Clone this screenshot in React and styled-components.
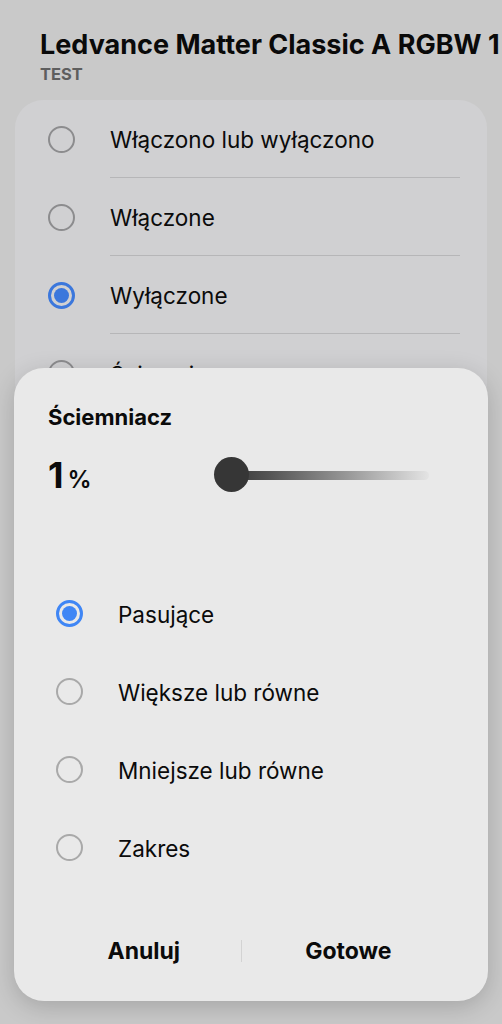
import React from "react";
import styled, { createGlobalStyle } from "styled-components";

const GlobalStyle = createGlobalStyle`
  html, body {
    margin: 0;
    padding: 0;
    background: #c9c9c9;
  }
  body {
    font-family: Inter, Roboto, "Noto Sans", sans-serif;
    color: #0b0b0b;
  }
`;

const Screen = styled.div`
  position: relative;
  width: 502px;
  height: 1024px;
  overflow: hidden;
  background: #c9c9c9;
`;

const Header = styled.div`
  padding: 28px 0 0 40px;
  white-space: nowrap;
`;

const Title = styled.div`
  font-size: 27px;
  font-weight: 700;
  line-height: 34px;
  color: #0a0a0a;
`;

const Subtitle = styled.div`
  margin-top: 2px;
  font-size: 16.5px;
  font-weight: 700;
  line-height: 20px;
  color: #5e5e5e;
`;

const Card = styled.div`
  margin: 16px 15px 0 15px;
  background: #d0d0d2;
  border-radius: 28px;
  padding: 0 27px 0 0;
`;

const Row = styled.div`
  display: flex;
  align-items: center;
  height: 78px;
  padding-left: ${({ $indent }) => $indent}px;
`;

const RowText = styled.div`
  flex: 1;
  height: 100%;
  display: flex;
  align-items: center;
  padding-top: 2px;
  margin-left: ${({ $gap }) => $gap}px;
  font-size: 22.5px;
  color: #0b0b0b;
  border-bottom: ${({ $divider }) => ($divider ? "1.5px solid #b6b6b8" : "none")};
  box-sizing: border-box;
`;

const Radio = styled.span`
  flex: none;
  width: 27px;
  height: 27px;
  box-sizing: border-box;
  border-radius: 50%;
  border: ${({ $on, $blue, $grey }) =>
    $on ? `3px solid ${$blue}` : `2px solid ${$grey}`};
  display: flex;
  align-items: center;
  justify-content: center;

  &::after {
    content: "";
    display: ${({ $on }) => ($on ? "block" : "none")};
    width: 15px;
    height: 15px;
    border-radius: 50%;
    background: ${({ $blue }) => $blue};
  }
`;

const Dialog = styled.div`
  position: absolute;
  left: 14px;
  right: 14px;
  top: 368px;
  height: 633px;
  background: #e9e9e9;
  border-radius: 30px;
  box-shadow: 0 6px 24px rgba(0, 0, 0, 0.18);
  display: flex;
  flex-direction: column;
`;

const DialogBody = styled.div`
  padding: 35px 0 0 34px;
`;

const DialogTitle = styled.div`
  font-size: 22px;
  font-weight: 700;
  line-height: 28px;
  color: #0b0b0b;
`;

const ValueRow = styled.div`
  display: flex;
  align-items: center;
  margin-top: 26px;
  height: 36px;
`;

const Value = styled.div`
  width: 166px;
  display: flex;
  align-items: baseline;
  font-weight: 700;
`;

const Big = styled.span`
  font-size: 36px;
  color: #0b0b0b;
`;

const Unit = styled.span`
  margin-left: 4px;
  font-size: 24px;
  font-weight: 600;
  color: #0b0b0b;
`;

const Slider = styled.div`
  position: relative;
  width: 215px;
  height: 36px;
  display: flex;
  align-items: center;
`;

const Track = styled.div`
  margin-left: 17px;
  width: 198px;
  height: 9px;
  border-radius: 5px;
  background: linear-gradient(to right, #393939 0%, #555 20%, #9a9a9a 60%, rgba(220, 220, 220, 0.4) 100%);
`;

const Knob = styled.div`
  position: absolute;
  left: 0;
  top: 0;
  width: 35px;
  height: 35px;
  border-radius: 50%;
  background: #363636;
`;

const Options = styled.div`
  margin-top: 81px;
`;

const Footer = styled.div`
  margin-top: auto;
  height: 64px;
  padding: 0 33px 18px;
  display: flex;
  align-items: center;
`;

const Action = styled.div`
  width: ${({ $w }) => $w}px;
  display: flex;
  justify-content: center;
  font-size: 23px;
  font-weight: 700;
  color: #0b0b0b;
  line-height: 28px;
`;

const Sep = styled.div`
  width: 1px;
  height: 22px;
  background: #d3d3d3;
`;

const bgRows = [
  { label: "Włączono lub wyłączono", on: false },
  { label: "Włączone", on: false },
  { label: "Wyłączone", on: true },
  { label: "Ściemniacz", on: false },
];

const options = [
  { label: "Pasujące", on: true },
  { label: "Większe lub równe", on: false },
  { label: "Mniejsze lub równe", on: false },
  { label: "Zakres", on: false },
];

export default function App() {
  return (
    <Screen>
      <GlobalStyle />
      <Header>
        <Title>Ledvance Matter Classic A RGBW 1</Title>
        <Subtitle>TEST</Subtitle>
      </Header>
      <Card>
        {bgRows.map((r, i) => (
          <Row key={r.label} $indent={33}>
            <Radio $on={r.on} $blue="#3b77dc" $grey="#8c8c8e" />
            <RowText $gap={35} $divider={i < bgRows.length - 1}>
              {r.label}
            </RowText>
          </Row>
        ))}
      </Card>

      <Dialog>
        <DialogBody>
          <DialogTitle>Ściemniacz</DialogTitle>
          <ValueRow>
            <Value>
              <Big>1</Big>
              <Unit>%</Unit>
            </Value>
            <Slider>
              <Track />
              <Knob />
            </Slider>
          </ValueRow>
        </DialogBody>
        <Options>
          {options.map((o) => (
            <Row key={o.label} $indent={42}>
              <Radio $on={o.on} $blue="#3f86f5" $grey="#a9a9a9" />
              <RowText $gap={35}>{o.label}</RowText>
            </Row>
          ))}
        </Options>
        <Footer>
          <Action $w={194}>Anuluj</Action>
          <Sep />
          <Action $w={214}>Gotowe</Action>
        </Footer>
      </Dialog>
    </Screen>
  );
}
